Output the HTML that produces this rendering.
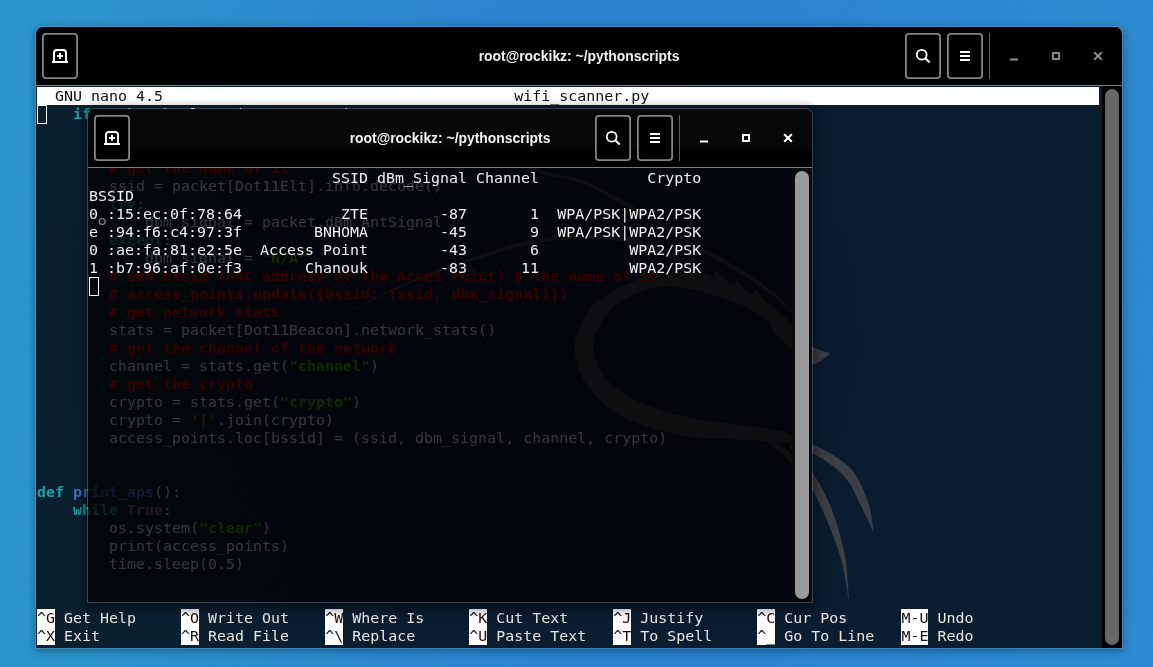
<!DOCTYPE html>
<html><head><meta charset="utf-8"><title>root@rockikz: ~/pythonscripts</title>
<style>
html,body{margin:0;padding:0}
body{width:1153px;height:667px;overflow:hidden;position:relative;background:#2a90d1;
 background-image:repeating-linear-gradient(135deg,rgba(255,255,255,0.008) 0 1.5px,rgba(0,0,0,0.008) 1.5px 3px),radial-gradient(ellipse 600px 620px at 620px 330px,rgba(42,112,204,0.95) 0,rgba(42,120,206,0.55) 50%,rgba(42,128,208,0) 100%),linear-gradient(90deg,#2a95cc 0%,#2a90d0 40%,#2b8bd3 100%);
 font-family:"DejaVu Sans Mono","Liberation Mono",monospace}
.win{position:absolute;overflow:hidden;will-change:transform;box-sizing:border-box;border-radius:7px 7px 0 0}
#w1{left:36px;top:27px;width:1086px;height:621px;box-shadow:0 0 0 1px rgba(110,180,235,0.35),0 2px 9px 1px rgba(0,0,0,0.35)}
#w2{left:87px;top:108px;width:726px;height:495px;border:1px solid rgba(165,180,195,0.26);box-shadow:0 3px 12px 2px rgba(0,0,0,0.55)}
.tb{position:absolute;left:0;top:0;right:0;height:58px;background:#000;border-bottom:1px solid #7d7d7d}
#w2 .tb{background:linear-gradient(#070707 0,#070707 63%,#000 75%,#000 100%)}
.btn{position:absolute;top:6px;width:36px;height:46px;box-sizing:border-box;border-radius:4px;background:#000;box-shadow:inset 0 0 0 1.8px #848484;display:flex;align-items:center;justify-content:center}
#w2 .btn{top:6px}
.title{position:absolute;left:0;right:0;top:0;height:58px;text-align:center;color:#f4f4f4;
 font:bold 13.9px/58px "Liberation Sans",sans-serif}
.sep{position:absolute;top:6px;right:132px;width:1px;height:46px;background:#5a5a5a}
.wc{position:absolute;top:24px}
.body{position:absolute;left:0;top:59px;right:0;bottom:0}
#w1 .body{background:rgba(1,0,2,0.785)}
#w2 .body{background:rgba(0,0,0,0.77)}
.ln{position:absolute;height:18px;line-height:18px;font-size:14.96px;white-space:pre;color:#e6e6e6;transform:scaleY(0.92);transform-origin:0 14px}
.k{color:#14a0a4}.c{color:#e00000}.s{color:#3fb000}.f{color:#3a6ebd}.m{color:#a4607c}
.hl{position:absolute;height:18px;background:#fff}
.ln i{font-style:normal;color:#111}
.sb{position:absolute;background:#000}
.th{position:absolute;border-radius:7px}
.cur{position:absolute;width:8px;height:17px;border:1px solid #fff}
</style></head><body>
<div class="win" id="w1">
<div class="tb">
<div class="btn" style="left:6px"><svg width="16" height="16" viewBox="0 0 16 16"><path d="M2 13.5V5a3 3 0 0 1 3-3h6a3 3 0 0 1 3 3v8.5" fill="none" stroke="#fff" stroke-width="2"/><rect x="0" y="13" width="16" height="2" fill="#fff"/><path d="M8 5v6M5 8h6" stroke="#fff" stroke-width="2"/></svg></div>
<div class="title">root@rockikz: ~/pythonscripts</div>
<div class="btn" style="right:181px"><svg width="16" height="16" viewBox="0 0 16 16"><circle cx="6.7" cy="6.7" r="4.9" fill="none" stroke="#fff" stroke-width="1.8"/><path d="M10.2 10.2L14.7 14.5" stroke="#fff" stroke-width="2" stroke-linecap="butt"/></svg></div>
<div class="btn" style="right:139px"><svg width="16" height="16" viewBox="0 0 16 16"><path d="M3 4h10M3 8h10M3 12h10" stroke="#fff" stroke-width="2"/></svg></div>
<div class="sep"></div>
<svg class="wc" style="right:103px" width="10" height="10" viewBox="0 0 10 10"><path d="M1 8.5h8" stroke="#8c8c8c" stroke-width="2"/></svg>
<svg class="wc" style="right:62px" width="10" height="10" viewBox="0 0 10 10"><rect x="3" y="2" width="6" height="6" fill="none" stroke="#8c8c8c" stroke-width="2"/></svg>
<svg class="wc" style="right:19px" width="10" height="10" viewBox="0 0 10 10"><path d="M1.2 1.2l7.6 7.6M8.8 1.2l-7.6 7.6" stroke="#8c8c8c" stroke-width="2"/></svg>
</div>
<div class="body">
<svg style="position:absolute;left:-36px;top:-86px" width="1153" height="667" viewBox="0 0 1153 667"><g fill="#3a3e45">
<path d="M830.0 353.0C827.0 351.8 818.7 351.2 812.0 346.0C805.3 340.8 796.7 328.7 790.0 322.0C783.3 315.3 777.5 310.3 772.0 306.0C766.5 301.7 762.7 299.2 757.0 296.0C751.3 292.8 744.7 290.0 738.0 287.0C731.3 284.0 724.2 280.5 717.0 278.0C709.8 275.5 703.7 272.8 695.0 272.0C686.3 271.2 674.3 271.8 665.0 273.0C655.7 274.2 650.2 274.3 639.0 279.0C627.8 283.7 608.0 292.7 598.0 301.0C588.0 309.3 582.8 320.0 579.0 329.0C575.2 338.0 573.5 345.5 575.0 355.0C576.5 364.5 580.0 375.7 588.0 386.0C596.0 396.3 606.7 408.7 623.0 417.0C639.3 425.3 665.0 432.2 686.0 436.0C707.0 439.8 730.0 438.7 749.0 440.0C768.0 441.3 791.5 443.3 800.0 444.0L800.0 438.0C796.7 436.8 791.2 433.3 780.0 431.0C768.8 428.7 748.7 426.3 733.0 424.0C717.3 421.7 701.7 420.7 686.0 417.0C670.3 413.3 652.2 408.2 639.0 402.0C625.8 395.8 614.4 388.0 607.0 380.0C599.6 372.0 596.3 362.0 594.5 354.0C592.7 346.0 592.2 340.3 596.0 332.0C599.8 323.7 607.3 311.3 617.0 304.0C626.7 296.7 641.8 290.5 654.0 288.0C666.2 285.5 677.0 286.8 690.0 289.0C703.0 291.2 719.5 296.2 732.0 301.0C744.5 305.8 757.8 312.5 765.0 318.0C772.2 323.5 770.8 329.2 775.0 334.0C779.2 338.8 783.8 342.0 790.0 347.0C796.2 352.0 805.3 362.9 812.0 364.0C818.7 365.1 827.0 355.2 830.0 353.5Z"/>
<path d="M716 270L711 280L731 286Z"/>
<path d="M737 280L732 289L751 296Z"/>
<path d="M756 289L751 298L769 306Z"/>
<path d="M520.0 150.0C523.3 153.3 530.2 165.2 540.0 170.0C549.8 174.8 567.5 174.7 579.0 178.5C590.5 182.3 597.2 186.8 609.0 193.0C620.8 199.2 635.5 207.5 650.0 216.0C664.5 224.5 682.3 236.0 696.0 244.0C709.7 252.0 721.7 257.8 732.0 264.0C742.3 270.2 750.0 275.4 758.0 281.0C766.0 286.6 774.7 292.8 780.0 297.5C785.3 302.2 788.3 307.1 790.0 309.0L790.0 310.0C788.3 308.5 785.3 305.2 780.0 301.0C774.7 296.8 766.0 290.4 758.0 285.0C750.0 279.6 742.3 274.6 732.0 268.5C721.7 262.4 709.7 256.5 696.0 248.5C682.3 240.5 664.5 229.1 650.0 220.5C635.5 211.9 620.8 203.4 609.0 197.0C597.2 190.6 590.5 186.0 579.0 182.0C567.5 178.0 549.8 178.2 540.0 173.0C530.2 167.8 523.3 154.2 520.0 150.5Z"/>
<path d="M340.0 316.0C348.3 311.7 373.3 297.8 390.0 290.0C406.7 282.2 425.0 274.8 440.0 269.0C455.0 263.2 466.3 259.5 480.0 255.0C493.7 250.5 507.0 245.4 522.0 242.0C537.0 238.6 553.7 235.5 570.0 234.5C586.3 233.5 605.0 233.8 620.0 236.0C635.0 238.2 646.7 242.7 660.0 248.0C673.3 253.3 693.3 264.7 700.0 268.0L700.0 274.0C693.3 270.7 673.3 259.5 660.0 254.0C646.7 248.5 635.0 243.5 620.0 241.0C605.0 238.5 586.3 238.2 570.0 239.0C553.7 239.8 537.0 242.8 522.0 246.0C507.0 249.2 493.7 254.2 480.0 258.5C466.3 262.8 455.0 266.4 440.0 272.0C425.0 277.6 406.7 284.6 390.0 292.0C373.3 299.4 348.3 312.4 340.0 316.5Z"/>
<path d="M790.0 441.0C793.7 441.5 802.0 439.5 812.0 444.0C822.0 448.5 840.7 458.3 850.0 468.0C859.3 477.7 864.1 491.5 868.0 502.0C871.9 512.5 872.6 526.2 873.5 531.0L873.0 531.5C871.2 527.6 866.8 517.2 862.0 508.0C857.2 498.8 852.3 485.2 844.0 476.0C835.7 466.8 821.0 457.5 812.0 453.0C803.0 448.5 793.7 449.7 790.0 449.0Z"/>
<path d="M765.0 436.0C769.2 438.7 782.2 446.0 790.0 452.0C797.8 458.0 805.0 462.3 812.0 472.0C819.0 481.7 826.5 496.0 832.0 510.0C837.5 524.0 842.2 541.3 845.0 556.0C847.8 570.7 848.3 591.0 849.0 598.0L848.5 598.5C847.2 591.9 844.8 572.4 841.0 559.0C837.2 545.6 831.3 530.5 826.0 518.0C820.7 505.5 815.0 493.5 809.0 484.0C803.0 474.5 797.3 468.2 790.0 461.0C782.7 453.8 769.2 444.3 765.0 441.0Z"/>
</g></svg>
<div class="hl" style="left:1px;top:1px;width:1062px"></div>
<div class="ln" style="left:1px;top:1px;color:#111">  GNU nano 4.5                                       wifi_scanner.py</div>
<div class="hl" style="left:1px;top:523px;width:18px"></div>
<div class="hl" style="left:1px;top:541px;width:18px"></div>
<div class="hl" style="left:145px;top:523px;width:18px"></div>
<div class="hl" style="left:145px;top:541px;width:18px"></div>
<div class="hl" style="left:289px;top:523px;width:18px"></div>
<div class="hl" style="left:289px;top:541px;width:18px"></div>
<div class="hl" style="left:433px;top:523px;width:18px"></div>
<div class="hl" style="left:433px;top:541px;width:18px"></div>
<div class="hl" style="left:577px;top:523px;width:18px"></div>
<div class="hl" style="left:577px;top:541px;width:18px"></div>
<div class="hl" style="left:721px;top:523px;width:18px"></div>
<div class="hl" style="left:721px;top:541px;width:18px"></div>
<div class="hl" style="left:865px;top:523px;width:27px"></div>
<div class="hl" style="left:865px;top:541px;width:27px"></div>
<div class="ln" style="left:1px;top:19px">    <b class="k">if</b> packet.haslayer(Dot11Beacon):</div>
<div class="ln" style="left:1px;top:37px">        <b class="c"># extract the MAC address of the network</b></div>
<div class="ln" style="left:1px;top:55px">        bssid = packet[Dot11].addr2</div>
<div class="ln" style="left:1px;top:73px">        <b class="c"># get the name of it</b></div>
<div class="ln" style="left:1px;top:91px">        ssid = packet[Dot11Elt].info.decode()</div>
<div class="ln" style="left:1px;top:109px">        <b class="k">try</b>:</div>
<div class="ln" style="left:1px;top:127px">            dbm_signal = packet.dBm_AntSignal</div>
<div class="ln" style="left:1px;top:145px">        <b class="k">except</b>:</div>
<div class="ln" style="left:1px;top:163px">            dbm_signal = <b class="s">"N/A"</b></div>
<div class="ln" style="left:1px;top:181px">        <b class="c"># add bssid (MAC address of the Acces Point) &amp; the name of it</b></div>
<div class="ln" style="left:1px;top:199px">        <b class="c"># access_points.update({bssid: (ssid, dbm_signal)})</b></div>
<div class="ln" style="left:1px;top:217px">        <b class="c"># get network stats</b></div>
<div class="ln" style="left:1px;top:235px">        stats = packet[Dot11Beacon].network_stats()</div>
<div class="ln" style="left:1px;top:253px">        <b class="c"># get the channel of the network</b></div>
<div class="ln" style="left:1px;top:271px">        channel = stats.get(<b class="s">"channel"</b>)</div>
<div class="ln" style="left:1px;top:289px">        <b class="c"># get the crypto</b></div>
<div class="ln" style="left:1px;top:307px">        crypto = stats.get(<b class="s">"crypto"</b>)</div>
<div class="ln" style="left:1px;top:325px">        crypto = <b class="s">'|'</b>.join(crypto)</div>
<div class="ln" style="left:1px;top:343px">        access_points.loc[bssid] = (ssid, dbm_signal, channel, crypto)</div>
<div class="ln" style="left:1px;top:397px"><b class="k">def</b> <b class="f">print_aps</b>():</div>
<div class="ln" style="left:1px;top:415px">    <b class="k">while</b> <b class="m">True</b>:</div>
<div class="ln" style="left:1px;top:433px">        os.system(<b class="s">"clear"</b>)</div>
<div class="ln" style="left:1px;top:451px">        print(access_points)</div>
<div class="ln" style="left:1px;top:469px">        time.sleep(0.5)</div>
<div class="ln" style="left:1px;top:523px"><i>^G</i> Get Help     <i>^O</i> Write Out    <i>^W</i> Where Is     <i>^K</i> Cut Text     <i>^J</i> Justify      <i>^C</i> Cur Pos      <i>M-U</i> Undo        </div>
<div class="ln" style="left:1px;top:541px"><i>^X</i> Exit         <i>^R</i> Read File    <i>^\</i> Replace      <i>^U</i> Paste Text   <i>^T</i> To Spell     <i>^_</i> Go To Line   <i>M-E</i> Redo        </div>
<div class="cur" style="left:1px;top:19px"></div>
<div class="sb" style="right:0;top:0;bottom:0;width:20px"></div>
<div class="th" style="right:3px;top:3px;bottom:3px;width:14px;background:#676767"></div>
</div></div>
<div class="win" id="w2">
<div class="tb">
<div class="btn" style="left:6px"><svg width="16" height="16" viewBox="0 0 16 16"><path d="M2 13.5V5a3 3 0 0 1 3-3h6a3 3 0 0 1 3 3v8.5" fill="none" stroke="#fff" stroke-width="2"/><rect x="0" y="13" width="16" height="2" fill="#fff"/><path d="M8 5v6M5 8h6" stroke="#fff" stroke-width="2"/></svg></div>
<div class="title">root@rockikz: ~/pythonscripts</div>
<div class="btn" style="right:181px"><svg width="16" height="16" viewBox="0 0 16 16"><circle cx="6.7" cy="6.7" r="4.9" fill="none" stroke="#fff" stroke-width="1.8"/><path d="M10.2 10.2L14.7 14.5" stroke="#fff" stroke-width="2" stroke-linecap="butt"/></svg></div>
<div class="btn" style="right:139px"><svg width="16" height="16" viewBox="0 0 16 16"><path d="M3 4h10M3 8h10M3 12h10" stroke="#fff" stroke-width="2"/></svg></div>
<div class="sep"></div>
<svg class="wc" style="right:103px" width="10" height="10" viewBox="0 0 10 10"><path d="M1 8.5h8" stroke="#ffffff" stroke-width="2"/></svg>
<svg class="wc" style="right:62px" width="10" height="10" viewBox="0 0 10 10"><rect x="3" y="2" width="6" height="6" fill="none" stroke="#ffffff" stroke-width="2"/></svg>
<svg class="wc" style="right:19px" width="10" height="10" viewBox="0 0 10 10"><path d="M1.2 1.2l7.6 7.6M8.8 1.2l-7.6 7.6" stroke="#ffffff" stroke-width="2"/></svg>
</div>
<div class="body">
<div class="ln" style="left:1px;top:1px;color:#f0f0f0">                           SSID dBm_Signal Channel            Crypto</div>
<div class="ln" style="left:1px;top:19px;color:#f0f0f0">BSSID</div>
<div class="ln" style="left:1px;top:37px;color:#f0f0f0">0 :15:ec:0f:78:64           ZTE        -87       1  WPA/PSK|WPA2/PSK</div>
<div class="ln" style="left:1px;top:55px;color:#f0f0f0">e :94:f6:c4:97:3f        BNHOMA        -45       9  WPA/PSK|WPA2/PSK</div>
<div class="ln" style="left:1px;top:73px;color:#f0f0f0">0 :ae:fa:81:e2:5e  Access Point        -43       6          WPA2/PSK</div>
<div class="ln" style="left:1px;top:91px;color:#f0f0f0">1 :b7:96:af:0e:f3       Chanouk        -83      11          WPA2/PSK</div>
<div class="cur" style="left:1px;top:109px"></div>
<svg style="position:absolute;left:8px;top:47px" width="13" height="13" viewBox="0 0 13 13"><circle cx="6.3" cy="6.5" r="3" fill="rgba(45,70,105,0.18)" stroke="#8b9097" stroke-width="1.1"/></svg>
<div class="sb" style="right:0;top:0;bottom:0;width:20px;background:#0a0a0a"></div>
<div class="th" style="right:3px;top:3px;bottom:3px;width:14px;background:#9a9a9a"></div>
</div></div>
</body></html>
